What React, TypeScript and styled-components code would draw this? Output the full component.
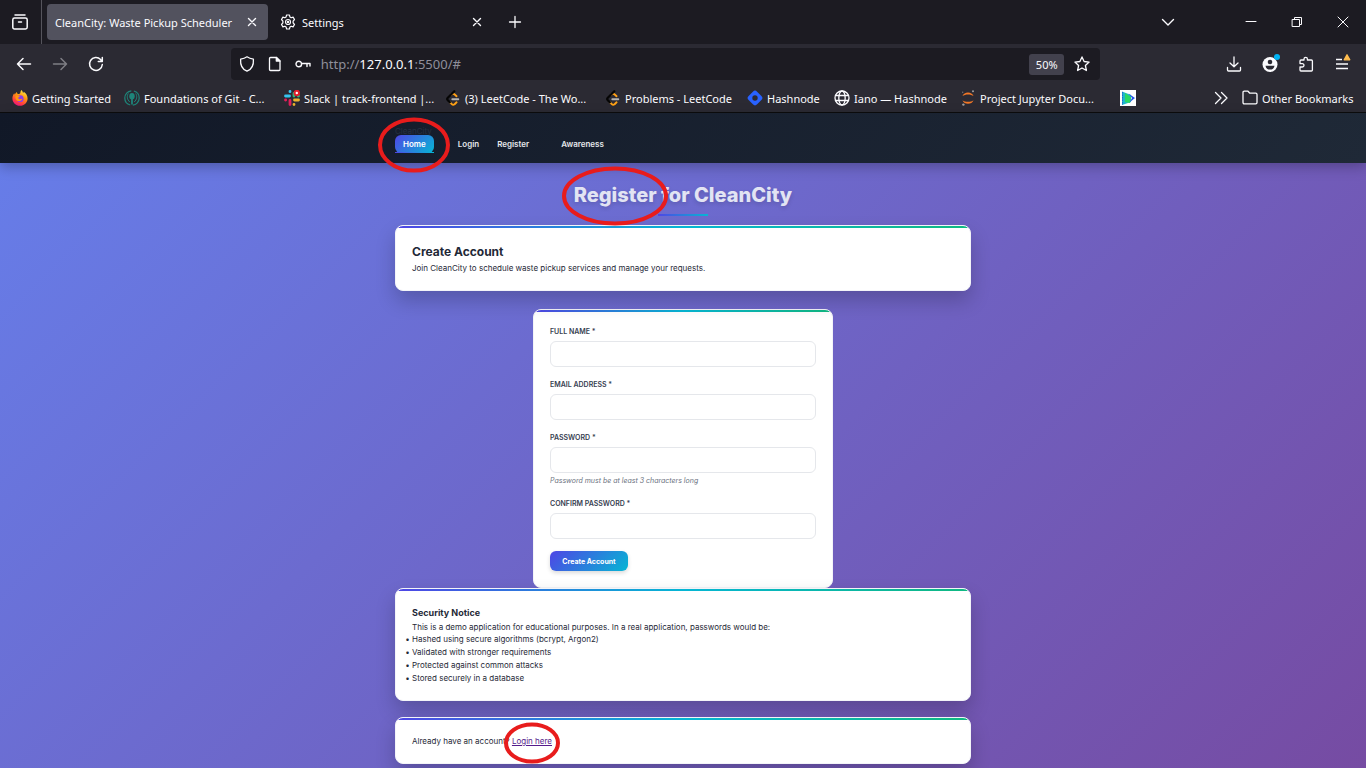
import React from "react";
import styled, { createGlobalStyle, css } from "styled-components";

const GlobalStyle = createGlobalStyle`
  * { box-sizing: border-box; }
  body { margin: 0; background: #2b2a33; }
  h1, h2, h3, p, ul { margin: 0; padding: 0; }
  button { font: inherit; border: 0; padding: 0; background: none; color: inherit; }
  a { color: inherit; text-decoration: none; }
`;

const Window = styled.div`
  display: flex;
  flex-direction: column;
  min-height: 100vh;
  overflow: hidden;
`;

/* ---------- Browser chrome ---------- */

const Chrome = styled.div`
  font-family: "Noto Sans", "Open Sans", sans-serif;
  font-size: 11px;
  color: #fbfbfe;
  background: #2b2a33;
  border-bottom: 1px solid #0c0c0d;
`;

const TabStrip = styled.div`
  display: flex;
  align-items: center;
  height: 44px;
  background: #1c1b22;
`;

const FirefoxView = styled.div`
  display: flex;
  align-items: center;
  justify-content: center;
  width: 42px;
  height: 44px;
  padding-right: 2px;
  border-right: 1px solid #55545c;
  margin-right: 5px;
`;

const Tab = styled.div<{ $active?: boolean }>`
  display: flex;
  align-items: center;
  gap: 6px;
  width: ${(p) => (p.$active ? 221 : 225)}px;
  height: 36px;
  padding: 0 8px 0 ${(p) => (p.$active ? 8 : 12)}px;
  border-radius: 4px;
  background: ${(p) => (p.$active ? "#52525e" : "transparent")};
  white-space: nowrap;
`;

const TabTitle = styled.span`
  flex: 1;
  min-width: 0;
`;

const IconButton = styled.button<{ $w?: number; $dim?: boolean }>`
  display: flex;
  flex: none;
  align-items: center;
  justify-content: center;
  width: ${(p) => p.$w ?? 36}px;
  height: 32px;
  opacity: ${(p) => (p.$dim ? 0.4 : 1)};
`;

const WindowControls = styled.div`
  display: flex;
  margin-left: 30px;
`;

const Spacer = styled.div<{ $grow?: number }>`
  flex: ${(p) => p.$grow ?? 1} 1 0;
`;

const Toolbar = styled.div`
  display: flex;
  align-items: center;
  height: 40px;
`;

const ButtonGroup = styled.div<{ $end?: boolean }>`
  display: flex;
  flex: none;
  width: ${(p) => (p.$end ? 147 : 112)}px;
  padding-left: ${(p) => (p.$end ? 0 : 6)}px;
  padding-right: ${(p) => (p.$end ? 6 : 0)}px;
  justify-content: ${(p) => (p.$end ? "flex-end" : "flex-start")};
`;

const UrlBar = styled.div`
  display: flex;
  flex: 869 1 0;
  align-items: center;
  height: 32px;
  padding-left: 2px;
  border-radius: 4px;
  background: #1c1b22;
`;

const UrlField = styled.div`
  display: grid;
  flex: 1;
  align-items: center;
  padding-left: 4px;
  font-size: 13px;
  line-height: 20px;
  color: #8f8f9a;

  b { font-weight: 400; color: #fbfbfe; }
`;

const Zoom = styled.button`
  width: 35px;
  height: 21px;
  border-radius: 3px;
  background: #42414d;
  line-height: 21px;
`;

const Bookmarks = styled.div`
  display: flex;
  align-items: center;
  height: 28px;
  padding: 0 12px;
`;

const Bookmark = styled.a<{ $w: number }>`
  display: flex;
  flex: none;
  align-items: center;
  gap: 4px;
  width: ${(p) => p.$w}px;
  white-space: nowrap;

  svg { flex: none; }
`;

/* ---------- Page ---------- */

const brand = "#4f46e5, #06b6d4";

const Page = styled.div`
  flex: 1;
  font-family: Inter, sans-serif;
  font-size: 8px;
  line-height: 13px;
  color: #1f2937;
  background: linear-gradient(135deg, #667eea 0%, #764ba2 100%);
`;

const Container = styled.div`
  width: 100%;
  max-width: 600px;
  margin: 0 auto;
  padding: 0 12px;
`;

const Header = styled.header`
  height: 50px;
  padding-top: 12px;
  background: linear-gradient(135deg, #111827, #1f2937);
  box-shadow: 0 4px 12px rgba(0, 0, 0, 0.25);
`;

const BrandName = styled.div`
  height: 10px;
  color: #273142;
`;

const NavList = styled.ul`
  display: flex;
  list-style: none;
`;

const NavItem = styled.li<{ $gap?: number }>`
  position: relative;
  margin-left: ${(p) => p.$gap ?? 0}px;
`;

const NavLink = styled.a<{ $active?: boolean }>`
  display: block;
  height: 18px;
  padding: 0 8px;
  line-height: 18px;
  border-radius: 6px;
  font-weight: 600;
  color: #e5e7eb;
  ${(p) =>
    p.$active &&
    css`
      color: #fff;
      background: linear-gradient(135deg, ${brand});

      &::after {
        content: "";
        position: absolute;
        inset: auto 0 0;
        height: 1px;
        background: linear-gradient(90deg, ${brand});
      }
    `}
`;

const MarkSvg = styled.svg`
  position: absolute;
  top: calc(50% + 1px);
  left: 50%;
  transform: translate(-50%, -50%);
  overflow: visible;
  pointer-events: none;
  z-index: 2;
`;

const Marked = styled.span`
  position: relative;
  display: inline-block;
`;

const TitleBlock = styled.div`
  display: flex;
  flex-direction: column;
  align-items: center;
  padding: 18px 0 9px;
`;

const Title = styled.h1`
  font-size: 20px;
  line-height: 28px;
  font-weight: 800;
  color: #e2e4f3;
  text-shadow: 0 2px 4px rgba(0, 0, 0, 0.15);
`;

const TitleRule = styled.div`
  width: 50px;
  height: 2px;
  margin-top: 5px;
  background: linear-gradient(90deg, ${brand});
`;

const cardSurface = css`
  border: 1px solid #f3f4f8;
  border-radius: 8px;
  background: linear-gradient(90deg, ${brand}, #10b981) top / 100% 2px no-repeat, #fff;
  background-origin: padding-box;
`;

const Card = styled.section`
  ${cardSurface}
  position: relative;
  margin-bottom: 16px;
  padding: 17px 16px 15px;
  box-shadow: 0 10px 20px rgba(0, 0, 0, 0.2);
`;

const FormCard = styled.form`
  ${cardSurface}
  width: 300px;
  max-width: 100%;
  margin: 18px auto 0;
  padding: 16px;
`;

const CardTitle = styled.h2`
  margin-bottom: 2px;
  font-size: 12px;
  line-height: 17px;
  font-weight: 700;
`;

const NoticeTitle = styled.h3`
  margin-bottom: 2px;
  font-size: 9px;
  line-height: 13px;
  font-weight: 700;
`;

const NoticeText = styled.p`
  line-height: 12px;
`;

const NoticeList = styled.ul`
  list-style: "• " outside;
`;

const Field = styled.div`
  display: flex;
  flex-direction: column;
  margin-bottom: 12px;
`;

const Label = styled.label`
  margin-bottom: 4px;
  font-size: 7px;
  line-height: 11px;
  font-weight: 600;
  text-transform: uppercase;
  color: #374151;
`;

const Input = styled.input`
  width: 100%;
  height: 26px;
  padding: 0 8px;
  border: 1px solid #e5e7eb;
  border-radius: 6px;
  background: #fff;
  font: inherit;
`;

const Hint = styled.small`
  margin-top: 2px;
  font-size: 7px;
  line-height: 11px;
  font-style: italic;
  color: #6b7280;
`;

const Submit = styled.button`
  display: block;
  width: 78px;
  height: 20px;
  border-radius: 6px;
  background: linear-gradient(135deg, ${brand});
  box-shadow: 0 2px 4px rgba(0, 0, 0, 0.15);
  color: #fff;
  font-size: 7px;
  font-weight: 700;
`;

const LoginLink = styled.a`
  color: #551a8b;
  text-decoration: underline;
`;

/* ---------- Icons ---------- */

type IconProps = { size?: number; sw?: number; children: React.ReactNode };

const Icon = ({ size = 16, sw = 1.3, children }: IconProps) => (
  <svg
    width={size}
    height={size}
    viewBox={`0 0 ${size} ${size}`}
    fill="none"
    stroke="currentColor"
    strokeWidth={sw}
    strokeLinecap="round"
    strokeLinejoin="round"
    aria-hidden="true"
  >
    {children}
  </svg>
);

const CloseIcon = () => (
  <Icon sw={1.4}><path d="M4.500 4.500l7 7M11.500 4.500l-7 7" /></Icon>
);

const GearIcon = () => (
  <Icon sw={1.2}>
    <path d="M6.600 1h2.800l.5 1.900 1.300.8 1.900-.6 1.400 2.400-1.400 1.700v1.600l1.400 1.700-1.400 2.400-1.900-.6-1.300.8-.5 1.900H6.600l-.5-1.900-1.300-.8-1.900.6-1.400-2.400 1.400-1.700V7.200L1.500 5.500l1.400-2.400 1.900.6 1.300-.8z" />
    <circle cx="8" cy="8" r="2.500" />
    <circle cx="8" cy="8" r=".6" />
  </Icon>
);

const FirefoxIcon = () => (
  <svg width="16" height="16" viewBox="0 0 16 16" aria-hidden="true">
    <defs>
      <linearGradient id="fx" x1=".8" y1="0" x2=".3" y2="1">
        <stop offset="0" stopColor="#fff44f" />
        <stop offset=".4" stopColor="#ff980e" />
        <stop offset=".8" stopColor="#ff3647" />
        <stop offset="1" stopColor="#e31587" />
      </linearGradient>
    </defs>
    <path fill="url(#fx)" d="M9.500 0c1 1 1.300 1.900 1.500 2.900.6-.3.700-.8.700-1.200C14 3 15.600 5.500 15.600 8.500c0 4-3.400 7.300-7.600 7.300S.4 12.600.4 8.500c0-2 .7-4 2-5.300 0 .6.1 1 .4 1.300C3.500 3.300 4 2.600 5 1.900c0 1 .3 1.600 1 2 1.500 0 2-.2 2.300-1C8.500 2 8.500 1 9.500 0z" />
    <circle cx="8.200" cy="8.700" r="3.400" fill="#8b3dea" />
    <path fill="#ff980e" d="M3.500 6c2-.8 3.500-.3 4.700.7-1.200 0-1.900.6-1.900 1.200 0 1.500 2.300 1.600 4 .5-.4 2.600-3.800 3.500-5.700 1.800C3.600 9.300 3.200 7.500 3.500 6z" />
  </svg>
);

const GitIcon = () => (
  <svg width="16" height="16" viewBox="0 0 16 16" fill="none" stroke="#1e857a" aria-hidden="true">
    <circle cx="8" cy="8" r="7.200" strokeWidth="1.200" strokeDasharray="20 2.600" strokeDashoffset="-13" />
    <path strokeWidth="1" d="M4.300 3.500C2.600 6 3 9.500 5.800 12M11.700 3.500C13.400 6 13 9.500 10.200 12" />
    <ellipse cx="8" cy="6.200" rx="2.700" ry="3.200" fill="#1e857a" stroke="none" />
    <path strokeWidth="1.800" d="M8 8v6.500" />
  </svg>
);

const SlackIcon = () => (
  <svg width="16" height="16" viewBox="0 0 16 16" fill="none" strokeWidth="2.800" strokeLinecap="round" aria-hidden="true">
    <path stroke="#36c5f0" d="M1.500 6h4M6 1.500v.2" />
    <path stroke="#2eb67d" d="M10 3.500V6M14.300 6h.2" />
    <path stroke="#ecb22e" d="M10.500 10h4M10 14.300v.2" />
    <path stroke="#e01e5a" d="M6 10.500v4M1.500 10h.2" />
    <circle cx="12.800" cy="3" r="2.200" fill="#fff" stroke="#e01e2b" strokeWidth="2" />
  </svg>
);

const LeetIcon = () => (
  <svg width="16" height="16" viewBox="0 0 16 16" fill="none" strokeWidth="1.900" strokeLinecap="round" strokeLinejoin="round" aria-hidden="true">
    <path stroke="#ffa116" d="M4.800 12.200l2 2c.8.800 2 .800 2.800 0l2-1.900M6 4.800c1.300-1.200 2.700-1.200 3.700-.3l1.900 1.700" />
    <path stroke="#050505" strokeWidth="2.200" d="M9.300 1.200L2.800 7.800c-.7.700-.7 1.700 0 2.400l2 2" />
    <path stroke="#b3b3b3" d="M7.300 9.200h6" />
  </svg>
);

const HashnodeIcon = () => (
  <svg width="16" height="16" viewBox="0 0 16 16" aria-hidden="true">
    <rect x="2" y="2" width="12" height="12" rx="3" transform="rotate(45 8 8)" fill="#2962ff" />
    <circle cx="8" cy="8" r="2.700" fill="#2b2a33" />
  </svg>
);

const GlobeIcon = () => (
  <Icon sw={1.3}>
    <circle cx="8" cy="8" r="7" />
    <ellipse cx="8" cy="8" rx="3.200" ry="7" />
    <path d="M1.500 5.500h13M1.500 10.500h13" />
  </Icon>
);

const JupyterIcon = () => (
  <svg width="16" height="16" viewBox="0 0 16 16" aria-hidden="true">
    <path fill="#f37726" d="M2.500 6C4 1.200 12 1.200 13.500 6 11 3.900 5 3.900 2.500 6zM2.500 10.200c1.500 4.800 9.500 4.800 11 0-2.500 2.100-8.500 2.100-11 0z" />
    <circle cx="13" cy="1.300" r="1" fill="#9e9e9e" />
    <circle cx="2.700" cy="2.300" r=".7" fill="#767677" />
    <circle cx="3.400" cy="14.600" r="1.200" fill="#9e9e9e" />
  </svg>
);

const PlayIcon = () => (
  <svg width="16" height="16" viewBox="0 0 16 16" aria-hidden="true">
    <rect width="16" height="16" fill="#fff" />
    <path fill="#1fb8c9" d="M2 1.500L11 5v7l-9 3z" />
    <path fill="#2bd964" d="M5 3l6 4-1 6-5-1z" />
    <path fill="#2456e6" d="M8.500 3.500L15 8l-5.500 4.500L12 8z" />
    <path stroke="#1f64d6" strokeDasharray="1.500 1" d="M2.500 2v13" />
  </svg>
);

const FolderIcon = () => (
  <Icon><path d="M1 12.500v-10c0-.8.500-1.300 1.300-1.300H6l1.800 2h5.900c.8 0 1.300.5 1.300 1.300v8c0 .8-.5 1.300-1.300 1.300H2.300c-.8 0-1.300-.5-1.300-1.300z" /></Icon>
);

type EllipseProps = { w: number; h: number; stroke?: number };

const RedEllipse = ({ w, h, stroke = 4 }: EllipseProps) => (
  <MarkSvg width={w} height={h} aria-hidden="true">
    <ellipse
      cx={w / 2}
      cy={h / 2}
      rx={(w - stroke) / 2}
      ry={(h - stroke) / 2}
      fill="none"
      stroke="#e81c1c"
      strokeWidth={stroke}
    />
  </MarkSvg>
);

/* ---------- Sections ---------- */

const BrowserChrome = () => (
  <Chrome>
    <TabStrip>
      <FirefoxView>
        <IconButton aria-label="View recent browsing">
          <Icon size={18} sw={1.5}>
            <path d="M4 2h10M3.500 5h11c1 0 1.700.7 1.700 1.700v7.600c0 1-.7 1.700-1.700 1.700h-11c-1 0-1.700-.7-1.700-1.700V6.700c0-1 .7-1.700 1.700-1.700zM7.500 9h3" />
          </Icon>
        </IconButton>
      </FirefoxView>
      <Tab $active>
        <TabTitle>CleanCity: Waste Pickup Scheduler</TabTitle>
        <IconButton $w={16} aria-label="Close tab"><CloseIcon /></IconButton>
      </Tab>
      <Tab>
        <GearIcon />
        <TabTitle>Settings</TabTitle>
        <IconButton $w={16} aria-label="Close tab"><CloseIcon /></IconButton>
      </Tab>
      <IconButton $w={44} aria-label="New tab">
        <Icon><path d="M8 2.500v11M2.500 8h11" /></Icon>
      </IconButton>
      <Spacer />
      <IconButton $w={60} aria-label="List all tabs">
        <Icon sw={1.4}><path d="M2.500 5.500L8 11l5.500-5.500" /></Icon>
      </IconButton>
      <WindowControls>
        <IconButton $w={46} aria-label="Minimize">
          <Icon sw={1}><path d="M3 7.500h10" /></Icon>
        </IconButton>
        <IconButton $w={46} aria-label="Restore">
          <Icon sw={1}><path d="M3.500 5.500h7v7h-7zM5.500 5.500v-2h7v7h-2" /></Icon>
        </IconButton>
        <IconButton $w={46} aria-label="Close">
          <Icon sw={1}><path d="M3 3l10 10M13 3L3 13" /></Icon>
        </IconButton>
      </WindowControls>
    </TabStrip>

    <Toolbar>
      <ButtonGroup>
        <IconButton aria-label="Back">
          <Icon sw={1.5}><path d="M14.500 8h-13M7 2.500L1.500 8 7 13.500" /></Icon>
        </IconButton>
        <IconButton $dim aria-label="Forward">
          <Icon sw={1.5}><path d="M1.500 8h13M9 2.500L14.500 8 9 13.500" /></Icon>
        </IconButton>
        <IconButton aria-label="Reload">
          <Icon sw={1.5}><path d="M14.300 8.500A6.400 6.400 0 1 1 12.600 3.600L14 5M14.300 1.500V5.500h-4" /></Icon>
        </IconButton>
      </ButtonGroup>
      <Spacer $grow={119} />
      <UrlBar>
        <IconButton $w={28} aria-label="Tracking protection">
          <Icon><path d="M8 .8c2 1.400 4 2 6.400 2.400.4 5.500-1.400 10-6.400 12C3 13.200 1.200 8.700 1.600 3.200 4 2.800 6 2.200 8 .8z" /></Icon>
        </IconButton>
        <IconButton $w={28} aria-label="Site information">
          <Icon><path d="M3.500 1.500h6L13 5v8.500c0 .6-.4 1-1 1H3.500c-.6 0-1-.4-1-1v-11c0-.6.4-1 1-1z" /><path fill="currentColor" d="M9.300 1.500V5H13z" /></Icon>
        </IconButton>
        <IconButton $w={28} aria-label="Saved login">
          <Icon sw={1.4}><circle cx="3.800" cy="8" r="2.800" /><path d="M6.600 7.500H15v2.500M12 7.500v3" /></Icon>
        </IconButton>
        <UrlField><span>http://<b>127.0.0.1</b>:5500/#</span></UrlField>
        <Zoom aria-label="Reset zoom level">50%</Zoom>
        <IconButton aria-label="Bookmark this page">
          <Icon><path d="M8 .9l2.100 4.600 5 .6-3.700 3.400 1 5L8 12l-4.400 2.500 1-5L.9 6.100l5-.6z" /></Icon>
        </IconButton>
      </UrlBar>
      <Spacer $grow={119} />
      <ButtonGroup $end>
        <IconButton aria-label="Downloads">
          <Icon><path d="M8 1v9.500M4 7l4 3.700L12 7M1.500 11.500V14c0 .6.400 1 1 1h11c.6 0 1-.4 1-1v-2.500" /></Icon>
        </IconButton>
        <IconButton aria-label="Account">
          <svg width="20" height="20" viewBox="0 0 20 20" aria-hidden="true">
            <circle cx="10" cy="10.500" r="7.500" fill="#fbfbfe" />
            <circle cx="10" cy="8" r="2.300" fill="#2b2a33" />
            <path fill="#2b2a33" d="M5.500 11.700h9c-.5 2.600-2 3.900-4.500 3.900s-4-1.300-4.500-3.900z" />
            <circle cx="17" cy="3" r="3" fill="#00b3f4" />
          </svg>
        </IconButton>
        <IconButton aria-label="Extensions">
          <Icon><path d="M6 4V3a1.700 1.700 0 0 1 3.400 0v1h4c.6 0 1 .4 1 1v9c0 .6-.4 1-1 1H3c-.6 0-1-.4-1-1v-3h2.300a1.700 1.700 0 0 0 0-3.400H2V5c0-.6.4-1 1-1z" /></Icon>
        </IconButton>
        <IconButton aria-label="Open application menu">
          <svg width="20" height="20" viewBox="0 0 20 20" fill="none" stroke="#fbfbfe" strokeWidth="1.300" aria-hidden="true">
            <path d="M4 5.500h6M4 10h12M4 14.500h12" />
            <path fill="#ffbd4f" stroke="#ffbd4f" strokeLinejoin="round" d="M15 .8l2.800 5H12.200z" />
          </svg>
        </IconButton>
      </ButtonGroup>
    </Toolbar>

    <Bookmarks>
      <Bookmark $w={112} href="#"><FirefoxIcon />Getting Started</Bookmark>
      <Bookmark $w={160} href="#"><GitIcon />Foundations of Git - C...</Bookmark>
      <Bookmark $w={161} href="#"><SlackIcon />Slack | track-frontend |...</Bookmark>
      <Bookmark $w={160} href="#"><LeetIcon />(3) LeetCode - The Wo...</Bookmark>
      <Bookmark $w={142} href="#"><LeetIcon />Problems - LeetCode</Bookmark>
      <Bookmark $w={87} href="#"><HashnodeIcon />Hashnode</Bookmark>
      <Bookmark $w={126} href="#"><GlobeIcon />Iano — Hashnode</Bookmark>
      <Bookmark $w={160} href="#"><JupyterIcon />Project Jupyter Docu...</Bookmark>
      <Bookmark $w={16} href="#" aria-label="Play"><PlayIcon /></Bookmark>
      <Spacer />
      <IconButton $w={42} aria-label="Show more bookmarks">
        <Icon><path d="M2.500 2.500L8 8l-5.500 5.500M8.500 2.500L14 8l-5.500 5.500" /></Icon>
      </IconButton>
      <Bookmark $w={112} href="#"><FolderIcon />Other Bookmarks</Bookmark>
    </Bookmarks>
  </Chrome>
);

type FormFieldProps = { id: string; label: string; type?: string; hint?: string };

const FormField = ({ id, label, type = "text", hint }: FormFieldProps) => (
  <Field>
    <Label htmlFor={id}>{label} *</Label>
    <Input id={id} type={type} required />
    {hint && <Hint>{hint}</Hint>}
  </Field>
);

export default function App() {
  return (
    <Window>
      <GlobalStyle />
      <BrowserChrome />
      <Page>
        <Header>
          <Container>
            <BrandName>CleanCity</BrandName>
            <nav>
              <NavList>
                <NavItem>
                  <NavLink href="#" $active>Home</NavLink>
                  <RedEllipse w={72} h={55} />
                </NavItem>
                <NavItem $gap={16}><NavLink href="#">Login</NavLink></NavItem>
                <NavItem $gap={2}><NavLink href="#">Register</NavLink></NavItem>
                <NavItem $gap={16}><NavLink href="#">Awareness</NavLink></NavItem>
              </NavList>
            </nav>
          </Container>
        </Header>

        <Container as="main">
          <TitleBlock>
            <Title>
              <Marked>
                Register
                <RedEllipse w={106} h={59} />
              </Marked>{" "}
              for CleanCity
            </Title>
            <TitleRule />
          </TitleBlock>

          <Card>
            <CardTitle>Create Account</CardTitle>
            <p>Join CleanCity to schedule waste pickup services and manage your requests.</p>
          </Card>

          <FormCard>
            <FormField id="name" label="Full Name" />
            <FormField id="email" label="Email Address" type="email" />
            <FormField
              id="password"
              label="Password"
              type="password"
              hint="Password must be at least 3 characters long"
            />
            <FormField id="confirm" label="Confirm Password" type="password" />
            <Submit type="submit">Create Account</Submit>
          </FormCard>

          <Card>
            <NoticeTitle>Security Notice</NoticeTitle>
            <NoticeText>
              This is a demo application for educational purposes. In a real application, passwords would be:
            </NoticeText>
            <NoticeList>
              <li>Hashed using secure algorithms (bcrypt, Argon2)</li>
              <li>Validated with stronger requirements</li>
              <li>Protected against common attacks</li>
              <li>Stored securely in a database</li>
            </NoticeList>
          </Card>

          <Card>
            <p>
              Already have an account?{" "}
              <Marked>
                <LoginLink href="#">Login here</LoginLink>
                <RedEllipse w={56} h={41} />
              </Marked>
            </p>
          </Card>
        </Container>
      </Page>
    </Window>
  );
}
